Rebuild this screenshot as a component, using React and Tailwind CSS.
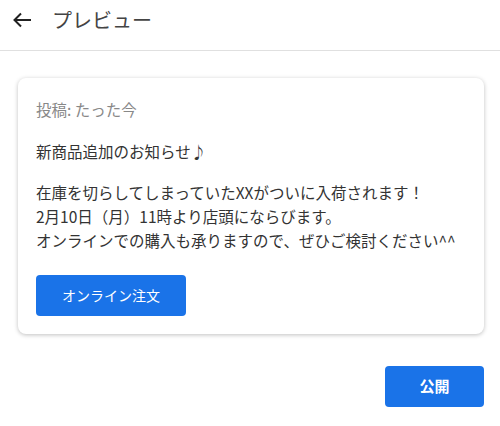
import React from 'react';

const ArrowBack = () => (
  <svg width="20" height="16" viewBox="0 0 20 16" fill="none" stroke="#222" strokeWidth="2">
    <path d="M19 8H2.5" />
    <path d="M9 1.5L2.5 8L9 14.5" />
  </svg>
);

const App = () => {
  return (
    <div className="w-[500px] h-[426px] bg-white font-['Noto_Sans_CJK_JP',sans-serif] text-[#333]">
      {/* ヘッダー */}
      <div className="h-[51px] border-b border-[#e0e0e0] flex items-start pt-[7px] pl-[11px]">
        <button className="h-[26px] w-[22px] flex items-center justify-center">
          <ArrowBack />
        </button>
        <h1 className="ml-[19px] text-[20px] leading-[26px] text-[#444]">プレビュー</h1>
      </div>

      <div className="pl-[18px] pr-[16px] pt-[27px]">
        {/* 投稿カード */}
        <div className="bg-white rounded-lg shadow-[0_1px_4px_rgba(0,0,0,0.25)] px-[18px] pt-[19px] pb-[18px]">
          <p className="text-[15.5px] leading-6 text-[#888]">投稿: たった今</p>
          <p className="mt-[18px] text-[15.5px] leading-6 text-[#333]">新商品追加のお知らせ♪</p>
          <p className="mt-[17px] text-[15.5px] leading-6 text-[#333]">
            在庫を切らしてしまっていたXXがついに入荷されます！<br />
            2月10日（月）11時より店頭にならびます。<br />
            オンラインでの購入も承りますので、ぜひご検討ください^^
          </p>
          <button className="mt-[23px] w-[150px] h-[41px] rounded bg-[#1a73e8] text-white text-[14px]">
            オンライン注文
          </button>
        </div>

        <div className="flex justify-end mt-[32px]">
          <button className="w-[99px] h-[41px] rounded bg-[#1a73e8] text-white text-[15px] font-bold">
            公開
          </button>
        </div>
      </div>
    </div>
  );
};

export default App;
